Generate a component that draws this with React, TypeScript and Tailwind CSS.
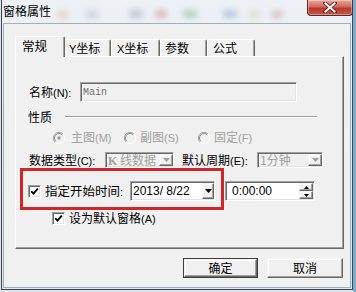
import React from "react";

const sunken =
  "border border-t-[#a0a0a0] border-l-[#a0a0a0] border-r-white border-b-white shadow-[inset_1px_1px_0_#696969,inset_-1px_-1px_0_#e3e3e3]";
const raised =
  "border border-t-[#f4f4f4] border-l-[#f4f4f4] border-r-[#696969] border-b-[#696969] shadow-[inset_-1px_-1px_0_#a0a0a0,inset_1px_1px_0_#ffffff] bg-[#f0f0f0]";

function L({ children }: { children: React.ReactNode }) {
  return <span className="font-['Liberation_Sans',sans-serif] text-[11px]">{children}</span>;
}

function Check() {
  return (
    <div className={`w-[13px] h-[13px] shrink-0 bg-white flex items-center justify-center ${sunken}`}>
      <svg width="9" height="9" viewBox="0 0 9 9">
        <path d="M1.2 4.2 L3.4 6.6 L7.8 1.6" fill="none" stroke="#000" strokeWidth="1.9" />
      </svg>
    </div>
  );
}

function Radio({ checked }: { checked?: boolean }) {
  return (
    <svg width="12" height="12" viewBox="0 0 12 12" className="shrink-0">
      <circle cx="6" cy="6" r="5.5" fill="#f0f0f0" />
      <path d="M10 2 A5.5 5.5 0 0 0 2 10" fill="none" stroke="#a0a0a0" strokeWidth="1" />
      <path d="M9.2 2.8 A4.5 4.5 0 0 0 2.8 9.2" fill="none" stroke="#8a8a8a" strokeWidth="1" />
      <path d="M2 10 A5.5 5.5 0 0 0 10 2" fill="none" stroke="#ffffff" strokeWidth="1" />
      {checked && <circle cx="6" cy="6" r="1.8" fill="#a0a0a0" />}
    </svg>
  );
}

function DownTri({ color }: { color: string }) {
  return (
    <svg width="7" height="4" viewBox="0 0 7 4">
      <path d="M0 0 H7 L3.5 4 Z" fill={color} />
    </svg>
  );
}

function DisabledCombo({ children, w }: { children: React.ReactNode; w: string }) {
  return (
    <div className={`${w} h-[16px] shrink-0 flex items-center ${sunken} bg-[#f0f0f0]`}>
      <span className="flex-1 pl-[2px] text-[#a0a0a0] leading-[12px] whitespace-nowrap">{children}</span>
      <div className={`w-[14px] h-[12px] shrink-0 flex items-center justify-center ${raised}`}>
        <DownTri color="#a0a0a0" />
      </div>
    </div>
  );
}

export default function App() {
  return (
    <div className="w-[356px] h-[292px] overflow-hidden bg-[linear-gradient(to_right,#dfe5ec_353px,#7aaecf_353px)] font-['Noto_Sans_CJK_SC','Noto_Sans_CJK_JP',sans-serif] text-[12px] text-black">
      <div className="ml-[1px] w-[352px] h-[290px] border-x border-b border-[#3a424c] px-[1px] pb-[1px] flex flex-col bg-[linear-gradient(180deg,#edf1f6,#e1e7ee)]">
        {/* Title bar */}
        <div className="h-[23px] flex items-start">
          <span className="pt-[4px] leading-[14px] text-[12px] whitespace-nowrap">窗格属性</span>
          <div className="flex-1 flex items-center mt-[10px] h-[8px]">
            <span className="ml-[6px] w-[12px] h-[7px] rounded-full bg-[#d8b48a] blur-[3px] opacity-50" />
            <span className="ml-[16px] w-[14px] h-[7px] rounded-full bg-[#a8b4c2] blur-[3px] opacity-50" />
            <span className="ml-[30px] w-[14px] h-[8px] rounded-full bg-[#8d9bb3] blur-[3px] opacity-50" />
            <span className="ml-[12px] w-[12px] h-[8px] rounded-full bg-[#c07c80] blur-[3px] opacity-50" />
            <span className="ml-[16px] w-[14px] h-[8px] rounded-full bg-[#7fa88a] blur-[3px] opacity-50" />
            <span className="ml-[26px] w-[14px] h-[8px] rounded-full bg-[#7f9cc4] blur-[3px] opacity-50" />
            <span className="ml-[12px] w-[12px] h-[7px] rounded-full bg-[#c8c89a] blur-[3px] opacity-50" />
            <span className="ml-[10px] w-[12px] h-[7px] rounded-full bg-[#b88a8a] blur-[3px] opacity-50" />
          </div>
          <div className="-mr-[2px] w-[46px] h-[16px] rounded-b-[4px] border border-t-0 border-[#5c2a25] bg-[linear-gradient(180deg,#e7a89c_0%,#d1675a_45%,#b8372b_55%,#c4584a_100%)] flex items-center justify-center shadow-[inset_0_0_0_1px_rgba(255,255,255,0.35)]">
            <svg width="14" height="11" viewBox="0 0 14 11">
              <path d="M2 1 L12 10 M12 1 L2 10" stroke="#5a1f1a" strokeWidth="3.6" strokeLinecap="square" />
              <path d="M2.5 1.5 L11.5 9.5 M11.5 1.5 L2.5 9.5" stroke="#ffffff" strokeWidth="2" strokeLinecap="square" />
            </svg>
          </div>
        </div>

        {/* Client area */}
        <div className="w-[348px] h-[265px] border border-[#a4aeb9] bg-[#f0f0f0] flex flex-col">
          {/* Tabs */}
          <div className="ml-[11px] mt-[12px] h-[20px] flex items-end">
            <div className="relative z-10 -mb-px w-[50px] h-[21px] bg-[#f0f0f0] border-t border-l border-white border-r border-r-[#696969] shadow-[inset_-1px_0_0_#a0a0a0] rounded-t-[2px] pl-[6px] pt-[2px] leading-[14px] text-[12.5px]">
              常规
            </div>
            <div className="w-[46px] h-[17px] border-t border-white border-r border-r-[#696969] shadow-[inset_-1px_0_0_#a0a0a0] rounded-t-[2px] pl-[4px] pt-[1px] leading-[14px] whitespace-nowrap">
              <L>Y</L>坐标
            </div>
            <div className="w-[49px] h-[17px] border-t border-l border-white border-r border-r-[#696969] shadow-[inset_-1px_0_0_#a0a0a0] rounded-t-[2px] pl-[5px] pt-[1px] leading-[14px] whitespace-nowrap">
              <L>X</L>坐标
            </div>
            <div className="w-[47px] h-[17px] border-t border-l border-white border-r border-r-[#696969] shadow-[inset_-1px_0_0_#a0a0a0] rounded-t-[2px] pl-[4px] pt-[1px] leading-[14px]">
              参数
            </div>
            <div className="w-[48px] h-[17px] border-t border-l border-white border-r border-r-[#696969] shadow-[inset_-1px_0_0_#a0a0a0] rounded-t-[2px] pl-[5px] pt-[1px] leading-[14px]">
              公式
            </div>
          </div>

          {/* Panel */}
          <div className="ml-[11px] w-[329px] h-[193px] border-t border-l border-white border-r border-b border-r-[#696969] border-b-[#696969] shadow-[inset_-1px_-1px_0_#a0a0a0] flex flex-col">
            {/* Name */}
            <div className="mt-[25px] h-[20px] flex items-center">
              <span className="pl-[13px] w-[64px] shrink-0 whitespace-nowrap leading-[14px]">
                名称<L>(N):</L>
              </span>
              <div className={`w-[217px] h-[20px] flex items-center ${sunken} bg-[#f0f0f0]`}>
                <span className="pl-[2px] font-['Liberation_Mono',monospace] text-[10px] text-[#707070]">Main</span>
              </div>
            </div>

            {/* 性质 */}
            <div className="mt-[8px] h-[13px] flex items-center">
              <span className="pl-[12px] w-[49px] leading-[13px]">性质</span>
              <div className="w-[252px] h-[2px] border-t border-[#a0a0a0] border-b border-b-white" />
            </div>

            {/* Radios */}
            <div className="mt-[8px] h-[13px] flex items-center pl-[37px] text-[#a0a0a0] leading-[13px]">
              <div className="w-[71px] flex items-center">
                <Radio checked />
                <span className="ml-[6px] whitespace-nowrap">
                  主图<L>(M)</L>
                </span>
              </div>
              <div className="w-[74px] flex items-center">
                <Radio />
                <span className="ml-[4px] whitespace-nowrap">
                  副图<L>(S)</L>
                </span>
              </div>
              <div className="flex items-center">
                <Radio />
                <span className="ml-[4px] whitespace-nowrap">
                  固定<L>(F)</L>
                </span>
              </div>
            </div>

            {/* Combos */}
            <div className="mt-[8px] h-[16px] flex items-center leading-[14px]">
              <span className="pl-[13px] w-[89px] shrink-0 whitespace-nowrap">
                数据类型<L>(C):</L>
              </span>
              <DisabledCombo w="w-[69px]">
                <span className="font-['Liberation_Serif',serif] font-bold text-[12px]">K</span> 线数据
              </DisabledCombo>
              <span className="ml-[8px] w-[75px] shrink-0 whitespace-nowrap">
                默认周期<L>(E):</L>
              </span>
              <DisabledCombo w="w-[66px]">1分钟</DisabledCombo>
            </div>

            {/* Red highlighted start time row */}
            <div className="h-[42px] flex items-start">
              <div className="ml-[4px] w-[204px] h-[42px] shrink-0 border-[3px] border-[#d0262a] pt-[10px] pl-[5px]">
                <div className="h-[20px] flex items-center">
                  <Check />
                  <span className="ml-[4px] w-[85px] shrink-0 whitespace-nowrap leading-[14px] text-[12.5px]">
                    指定开始时间<L>:</L>
                  </span>
                  <div className={`w-[85px] h-[20px] shrink-0 flex items-center bg-white ${sunken}`}>
                    <span className="flex-1 pl-[2px] font-['Liberation_Sans',sans-serif] text-[12px] leading-[14px] whitespace-pre">2013/ 8/22</span>
                    <div className={`w-[12px] h-[16px] flex items-center justify-center ${raised}`}>
                      <DownTri color="#000" />
                    </div>
                  </div>
                </div>
              </div>
              <div className={`ml-[1px] mt-[13px] w-[90px] h-[20px] flex items-center bg-white ${sunken}`}>
                <span className="flex-1 pl-[6px] font-['Liberation_Sans',sans-serif] text-[12px] leading-[14px]">0:00:00</span>
                <div className="w-[14px] h-[16px] mr-[1px] flex flex-col">
                  <div className={`h-[8px] flex items-center justify-center ${raised}`}>
                    <svg width="5" height="3" viewBox="0 0 5 3"><path d="M0 3 H5 L2.5 0 Z" fill="#000" /></svg>
                  </div>
                  <div className={`h-[8px] flex items-center justify-center ${raised}`}>
                    <svg width="5" height="3" viewBox="0 0 5 3"><path d="M0 0 H5 L2.5 3 Z" fill="#000" /></svg>
                  </div>
                </div>
              </div>
            </div>

            {/* Default pane */}
            <div className="mt-[2px] h-[13px] flex items-center pl-[36px]">
              <Check />
              <span className="ml-[4px] whitespace-nowrap leading-[14px]">
                设为默认窗格<L>(A)</L>
              </span>
            </div>
          </div>

          {/* Buttons */}
          <div className="mt-[9px] ml-[179px] flex">
            <div className="w-[75px] h-[20px] border border-[#3c3c3c]">
              <div className={`w-full h-full flex items-center justify-center leading-[14px] ${raised}`}>确定</div>
            </div>
            <div className={`ml-[9px] w-[76px] h-[20px] flex items-center justify-center leading-[14px] ${raised}`}>取消</div>
          </div>
        </div>
      </div>
    </div>
  );
}
